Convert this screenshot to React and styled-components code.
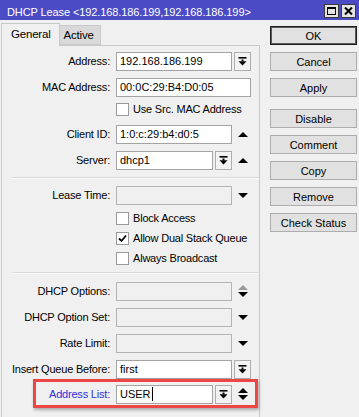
import React from "react";
import styled, { createGlobalStyle } from "styled-components";

const GlobalStyle = createGlobalStyle`
  html, body {
    margin: 0;
    padding: 0;
    background: #f0f0f0;
  }
  body {
    font-family: "Liberation Sans", Arial, sans-serif;
    font-size: 11px;
    color: #000;
  }
`;

const Window = styled.div`
  width: 359px;
  height: 417px;
  background: #f0f0f0;
  display: flex;
  flex-direction: column;
  overflow: hidden;
`;

const TitleBar = styled.div`
  height: 20px;
  background: #4b4bc6;
  display: flex;
  align-items: center;
  justify-content: space-between;
  padding: 0 3px 0 7px;
  flex-shrink: 0;
`;

const TitleText = styled.span`
  color: #fff;
  font-size: 11px;
  letter-spacing: -0.1px;
  white-space: nowrap;
  margin-top: 3px;
`;

const TitleButtons = styled.div`
  display: flex;
  gap: 2px;
  margin-top: 2px;
`;

const TitleButton = styled.div`
  width: 15px;
  height: 14px;
  box-sizing: border-box;
  border: 1px solid #3a3a3a;
  background: #e4e4e4;
  display: flex;
  align-items: center;
  justify-content: center;
`;

const Body = styled.div`
  flex: 1;
  display: flex;
`;

const LeftPane = styled.div`
  width: 259px;
  margin-left: 1px;
  padding-top: 3px;
  display: flex;
  flex-direction: column;
`;

const Tabs = styled.div`
  display: flex;
  align-items: flex-end;
  height: 22px;
  position: relative;
  z-index: 1;
`;

const Tab = styled.div`
  box-sizing: border-box;
  height: ${(p) => (p.$active ? "23px" : "20px")};
  padding: ${(p) => (p.$active ? "4px 8px 0 9px" : "3px 6px 0 4px")};
  background: ${(p) => (p.$active ? "#f0f0f0" : "#d9d9d9")};
  border: 1px solid #c9c9c9;
  border-bottom: ${(p) => (p.$active ? "none" : "1px solid #c9c9c9")};
  border-left: ${(p) => (p.$active ? "1px solid #c9c9c9" : "none")};
  margin-bottom: ${(p) => (p.$active ? "-1px" : "0")};
  letter-spacing: -0.2px;
  font-size: 11.5px;
`;

const Panel = styled.div`
  flex: 1;
  border: 1px solid #c9c9c9;
  border-bottom: none;
  display: flex;
  flex-direction: column;
  padding-top: 5px;
`;

const FieldRow = styled.div`
  position: relative;
  display: flex;
  align-items: center;
  height: 20px;
  margin-top: ${(p) => p.$mt || 0}px;

  ${(p) =>
    p.$highlight &&
    `
    &::after {
      content: "";
      position: absolute;
      left: 31px;
      right: 1px;
      top: -5px;
      bottom: -4px;
      border: 3px solid #ee4545;
      box-shadow: 1px 2px 3px rgba(0, 0, 0, 0.3);
      pointer-events: none;
    }
  `}
`;

const Label = styled.div`
  width: 108px;
  margin-right: 6px;
  text-align: right;
  white-space: nowrap;
  letter-spacing: -0.2px;
  color: ${(p) => (p.$blue ? "#2f2fe0" : "#000")};
`;

const FieldGroup = styled.div`
  width: 135px;
  display: flex;
  align-items: center;
  gap: 2px;
`;

const Input = styled.div`
  flex: 1;
  height: 19px;
  box-sizing: border-box;
  border: 1px solid ${(p) => (p.$disabled ? "#b4b4b4" : "#a3a3a3")};
  background: ${(p) => (p.$disabled ? "#f0f0f0" : "#fff")};
  padding: 0 3px;
  display: flex;
  align-items: center;
  white-space: nowrap;
  overflow: hidden;
`;

const Caret = styled.span`
  display: inline-block;
  width: 1px;
  height: 14px;
  background: #000;
  margin-left: 1px;
`;

const DropButton = styled.div`
  width: 17px;
  height: 19px;
  box-sizing: border-box;
  border: 1px solid #adadad;
  background: #f3f3f3;
  display: flex;
  align-items: center;
  justify-content: center;
  flex-shrink: 0;
`;

const Slot = styled.div`
  width: 17px;
  height: 19px;
  display: flex;
  flex-direction: column;
  align-items: center;
  justify-content: center;
  gap: 2px;
  flex-shrink: 0;
`;

const CheckRow = styled.label`
  display: flex;
  align-items: center;
  height: 20px;
  padding-left: 114px;
  margin-top: ${(p) => p.$mt || 0}px;
  letter-spacing: -0.2px;
`;

const CheckBox = styled.span`
  width: 13px;
  height: 13px;
  box-sizing: border-box;
  border: 1px solid #9a9a9a;
  background: #fff;
  margin-right: 4px;
  display: flex;
  align-items: center;
  justify-content: center;
`;

const Separator = styled.div`
  height: 1px;
  margin: ${(p) => p.$mt || 0}px 0 0 10px;
  background: #dadada;
  border-bottom: 1px solid #fafafa;
`;

const ButtonColumn = styled.div`
  width: 87px;
  margin-left: 10px;
  padding-top: 6px;
  display: flex;
  flex-direction: column;
`;

const SideButton = styled.div`
  height: 19px;
  box-sizing: border-box;
  margin-top: ${(p) => p.$mt ?? 7}px;
  border: 1px solid ${(p) => (p.$default ? "#1e1e1e" : "#adadad")};
  box-shadow: ${(p) => (p.$default ? "inset 0 0 0 1px #5a5a5a" : "none")};
  background: #e1e1e1;
  display: flex;
  align-items: center;
  justify-content: center;
  font-size: 11px;
`;

const BottomIcon = () => (
  <svg width="9" height="9" viewBox="0 0 9 9">
    <rect x="0.5" y="0" width="8" height="1.6" fill="#000" />
    <rect x="3.5" y="2.5" width="2" height="2" fill="#000" />
    <polygon points="0.5,4.2 8.5,4.2 4.5,8.4" fill="#000" />
  </svg>
);

const UpIcon = ({ color = "#000" }) => (
  <svg width="10" height="5" viewBox="0 0 10 5">
    <polygon points="0,5 10,5 5,0" fill={color} />
  </svg>
);

const DownIcon = ({ color = "#000" }) => (
  <svg width="10" height="5" viewBox="0 0 10 5">
    <polygon points="0,0 10,0 5,5" fill={color} />
  </svg>
);

const CheckMark = () => (
  <svg width="9" height="9" viewBox="0 0 9 9">
    <polyline points="1,4.5 3.5,7 8,1.5" fill="none" stroke="#000" strokeWidth="1.8" />
  </svg>
);

const MaxIcon = () => (
  <svg width="9" height="8" viewBox="0 0 9 8">
    <rect x="0.5" y="0.5" width="8" height="7" fill="none" stroke="#000" strokeWidth="1" />
    <rect x="0.5" y="0.5" width="8" height="1.5" fill="#000" />
  </svg>
);

const CloseIcon = () => (
  <svg width="9" height="8" viewBox="0 0 9 8">
    <path d="M1 0.5 L8 7.5 M8 0.5 L1 7.5" stroke="#000" strokeWidth="2" />
  </svg>
);

const Field = ({ label, value, disabled, drop, slot, mt, blue, highlight, caret }) => (
  <FieldRow $mt={mt} $highlight={highlight}>
    <Label $blue={blue}>{label}</Label>
    <FieldGroup>
      <Input $disabled={disabled}>
        {value}
        {caret && <Caret />}
      </Input>
      {drop && (
        <DropButton>
          <BottomIcon />
        </DropButton>
      )}
      {slot && <Slot>{slot}</Slot>}
    </FieldGroup>
  </FieldRow>
);

const Check = ({ label, checked, mt }) => (
  <CheckRow $mt={mt}>
    <CheckBox>{checked && <CheckMark />}</CheckBox>
    {label}
  </CheckRow>
);

const App = () => {
  return (
    <>
      <GlobalStyle />
      <Window>
        <TitleBar>
          <TitleText>DHCP Lease &lt;192.168.186.199,192.168.186.199&gt;</TitleText>
          <TitleButtons>
            <TitleButton>
              <MaxIcon />
            </TitleButton>
            <TitleButton>
              <CloseIcon />
            </TitleButton>
          </TitleButtons>
        </TitleBar>
        <Body>
          <LeftPane>
            <Tabs>
              <Tab $active>General</Tab>
              <Tab>Active</Tab>
            </Tabs>
            <Panel>
              <Field label="Address:" value="192.168.186.199" drop />
              <Field label="MAC Address:" value="00:0C:29:B4:D0:05" mt={6} />
              <Check label="Use Src. MAC Address" mt={2} />
              <Field label="Client ID:" value="1:0:c:29:b4:d0:5" mt={5} slot={<UpIcon />} />
              <Field label="Server:" value="dhcp1" drop mt={6} slot={<UpIcon />} />
              <Separator $mt={7} />
              <Field label="Lease Time:" value="" disabled mt={6} slot={<DownIcon />} />
              <Check label="Block Access" mt={3} />
              <Check label="Allow Dual Stack Queue" checked />
              <Check label="Always Broadcast" />
              <Separator $mt={4} />
              <Field
                label="DHCP Options:"
                value=""
                disabled
                mt={7}
                slot={
                  <>
                    <UpIcon color="#9a9a9a" />
                    <DownIcon />
                  </>
                }
              />
              <Field label="DHCP Option Set:" value="" disabled mt={6} slot={<DownIcon />} />
              <Field label="Rate Limit:" value="" disabled mt={6} slot={<DownIcon />} />
              <Field label="Insert Queue Before:" value="first" drop mt={6} />
              <Field
                label="Address List:"
                value="USER"
                blue
                caret
                highlight
                drop
                mt={5}
                slot={
                  <>
                    <UpIcon />
                    <DownIcon />
                  </>
                }
              />
            </Panel>
          </LeftPane>
          <ButtonColumn>
            <SideButton $default $mt={0}>OK</SideButton>
            <SideButton>Cancel</SideButton>
            <SideButton>Apply</SideButton>
            <SideButton $mt={12}>Disable</SideButton>
            <SideButton>Comment</SideButton>
            <SideButton>Copy</SideButton>
            <SideButton>Remove</SideButton>
            <SideButton>Check Status</SideButton>
          </ButtonColumn>
        </Body>
      </Window>
    </>
  );
};

export default App;
